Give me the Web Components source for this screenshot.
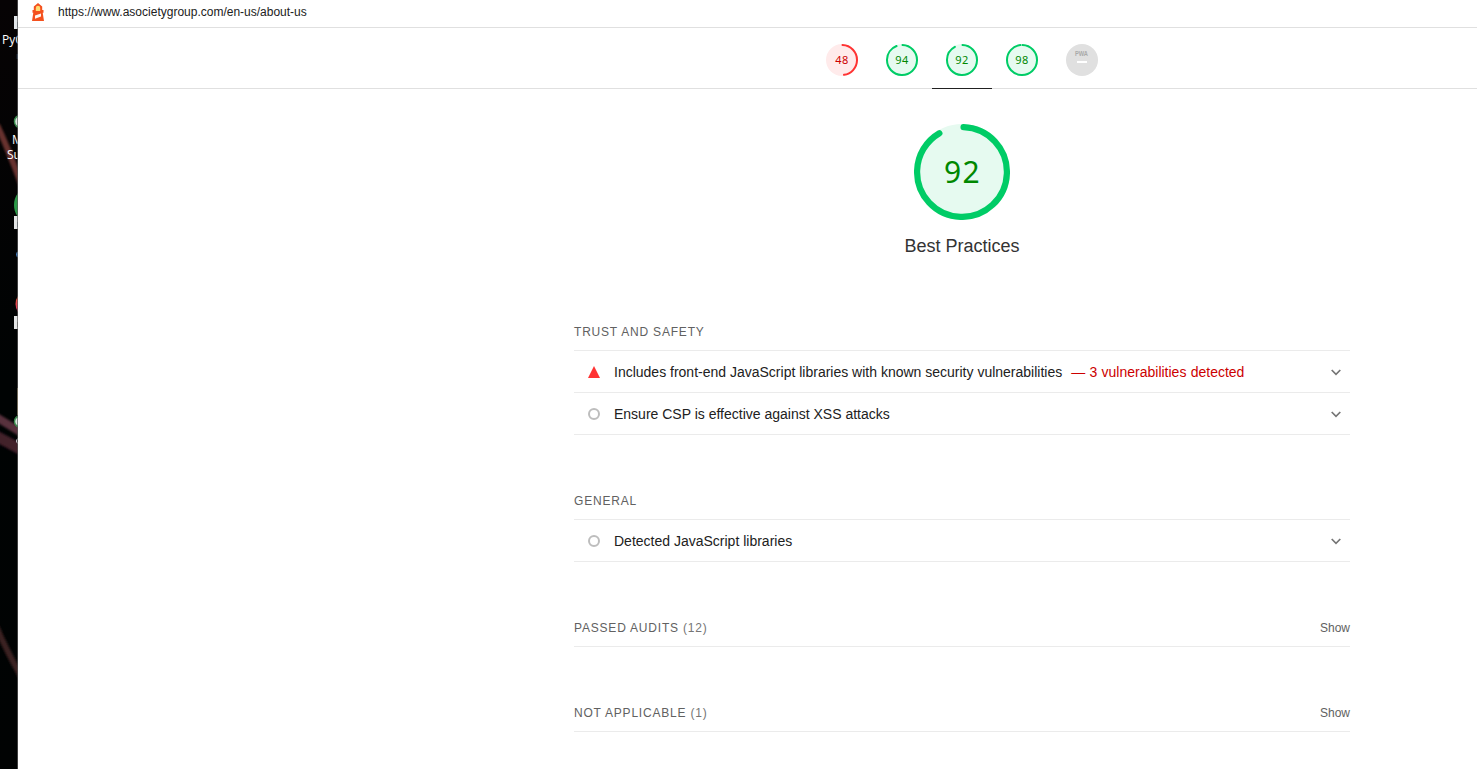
<!DOCTYPE html>
<html lang="en">
<head>
<meta charset="utf-8">
<title>Lighthouse Report</title>
<style>
html,body{margin:0;height:100%;overflow:hidden;background:#fff}
body{font-family:"Liberation Sans",Arial,sans-serif;color:#212121}
</style>
</head>
<body>
<lh-window>
  <desk-strip slot="desk"></desk-strip>
  <lh-topbar>https://www.asocietygroup.com/en-us/about-us</lh-topbar>
  <lh-scores>
    <score-gauge score="48" level="fail"></score-gauge>
    <score-gauge score="94"></score-gauge>
    <score-gauge score="92" selected></score-gauge>
    <score-gauge score="98"></score-gauge>
    <pwa-gauge></pwa-gauge>
  </lh-scores>
  <lh-category>
    <score-gauge slot="gauge" score="92" large></score-gauge>
    <span slot="name">Best Practices</span>
    <audit-group label="Trust and Safety">
      <audit-row status="fail">Includes front-end JavaScript libraries with known security vulnerabilities<span slot="detail">— 3 vulnerabilities detected</span></audit-row>
      <audit-row>Ensure CSP is effective against XSS attacks</audit-row>
    </audit-group>
    <audit-group label="General">
      <audit-row>Detected JavaScript libraries</audit-row>
    </audit-group>
    <audit-group label="Passed audits" count="(12)"></audit-group>
    <audit-group label="Not applicable" count="(1)"></audit-group>
  </lh-category>
</lh-window>
<script>
const define = (name, render) => customElements.define(name, class extends HTMLElement {
  constructor() { super(); this.attachShadow({ mode: 'open' }); }
  connectedCallback() { this.shadowRoot.innerHTML = render(this); }
});

define('lh-window', () => `
<style>
:host{display:grid;grid-template-columns:18px minmax(0,1fr);width:100%;height:100vh;overflow:hidden}
main{background:#fff;min-width:0;overflow:hidden}
</style><slot name="desk"></slot><main><slot></slot></main>`);

define('desk-strip', () => `
<style>
:host{display:block;overflow:hidden;background:#010303}
svg{display:block}
text{font:12px "Open Sans","Noto Sans",sans-serif;fill:#fff}
</style>
<svg width="18" height="769" viewBox="0 0 18 769">
<defs>
<linearGradient id="edge" x1="0" y1="0" x2="0" y2="1"><stop offset="0" stop-color="#060304"/><stop offset=".5" stop-color="#000303"/><stop offset="1" stop-color="#010303"/></linearGradient>
<linearGradient id="warm" x1="0" y1="0" x2="0" y2="1"><stop offset="0" stop-color="#f0632b"/><stop offset="1" stop-color="#dc286f"/></linearGradient>
<filter id="soft" x="-50%" y="-20%" width="200%" height="140%"><feGaussianBlur stdDeviation="1.3"/></filter>
</defs>
<rect width="18" height="769" fill="url(#edge)"/>
<g filter="url(#soft)" fill="none">
<path d="M-3 125Q8 148 22 186" stroke="#67302f" stroke-width="6"/>
<path d="M-4 417L22 433" stroke="#58303e" stroke-width="8"/>
<path d="M-4 436L22 450" stroke="#43202c" stroke-width="11"/>
<path d="M-4 626Q6 650 22 678" stroke="#3b2020" stroke-width="6"/>
</g>
<path d="M14 16h4v13h-4z" fill="#e3e7ea"/><path d="M17 22h1v5h-1z" fill="#9ab"/>
<text x="2" y="44">PyC</text>
<path d="M17.3 54v5" stroke="#35577d"/>
<circle cx="21" cy="121.500" r="6.500" fill="#dbe6df" stroke="#3b8d4f" stroke-width="1.500"/>
<text x="12" y="144">M</text><text x="7" y="159">Su</text>
<ellipse cx="26" cy="205" rx="12" ry="16" fill="#2c9a48"/>
<path d="M14 216h4v13h-4z" fill="#e3e5e5"/><path d="M17 222h1v5h-1z" fill="#9ab"/>
<circle cx="19" cy="254.500" r="3" fill="#427cbd"/>
<ellipse cx="25" cy="304" rx="9.500" ry="12" fill="url(#warm)"/>
<path d="M14 316h4v13h-4z" fill="#e3e5e5"/><path d="M17 322h1v5h-1z" fill="#aaa"/>
<path d="M17 388h1v27h-1z" fill="#a58e59"/>
<circle cx="20" cy="421.500" r="5.500" fill="#dbe6df" stroke="#3b8d4f" stroke-width="1.500"/>
<circle cx="19" cy="441" r="2.500" fill="none" stroke="#d7dde0"/>
<path d="M17 0h1v769h-1z" fill="#5b5b5b" opacity=".7"/>
</svg>`);

define('lh-topbar', () => `
<style>
:host{display:flex;align-items:center;height:27px;border-bottom:1px solid #e0e0e0;font-size:12px;color:#212121}
svg{width:14px;height:20px;margin:-3px 13px 0 13px;flex:none}
span{position:relative;top:-2px}
</style>
<svg viewBox="0 0 14 20">
<path d="M2.800 4.500L7 1l4.200 3.500V8h1.300v2.700h-.8L13 19H1l1.300-8.300h-.8V8h1.300z" fill="#f4511e"/>
<path d="M4.800 9V6Q4.800 3.700 7 3.700T9.200 6v3z" fill="#ffdc72"/>
<path d="M4 13.500l6-2v3L4 16.800z" fill="#fff5f0"/>
</svg><span><slot></slot></span>`);

define('lh-scores', () => `
<style>
:host{display:flex;height:60px;padding-left:794px;border-bottom:1px solid #e0e0e0}
</style><slot></slot>`);

define('score-gauge', el => {
  const n = +el.getAttribute('score'), big = el.hasAttribute('large'), bad = el.getAttribute('level') === 'fail';
  const s = big ? 96 : 32, w = big ? 6.2 : 2, r = s / 2 - w / 2, c = 2 * Math.PI * r;
  const len = Math.max(0, n / 100 * c - w / 2);
  return `
<style>
:host{display:flex;justify-content:center;align-items:center;box-sizing:border-box;flex:none;width:${big ? 96 : 60}px;height:${big ? 96 : 61}px;${big ? '' : 'padding-bottom:' + (el.hasAttribute('selected') ? 0 : 1) + 'px;padding-top:3px;'}${el.hasAttribute('selected') ? 'border-bottom:1px solid #212121;' : ''}}
.dial{display:grid;width:${s}px;height:${s}px}
.dial>*{grid-area:1/1}
b{place-self:center;font:400 ${big ? '30px' : '11px'}/1 "Noto Sans",sans-serif;letter-spacing:${big ? 1.3 : .4}px;margin-left:${big ? 1 : 0}px;color:${bad ? '#c00' : '#080'};z-index:1}
</style>
<div class="dial"><svg width="${s}" height="${s}">
<circle cx="${s / 2}" cy="${s / 2}" r="${s / 2}" fill="${bad ? '#ffebeb' : '#e6faf0'}"/>
<circle cx="${s / 2}" cy="${s / 2}" r="${r}" fill="none" stroke="${bad ? '#f33' : '#0c6'}" stroke-width="${w}" stroke-linecap="round" stroke-dasharray="${len} ${c}" transform="rotate(${-90 + w / 4 / r * 57.3} ${s / 2} ${s / 2})"/>
</svg><b>${n}</b></div>`;
});

define('pwa-gauge', () => `
<style>
:host{display:flex;justify-content:center;align-items:center;width:60px;height:61px;box-sizing:border-box;padding:3px 0 1px;flex:none}
text{font:700 7px "Liberation Sans",sans-serif;fill:#aaa;text-anchor:middle}
</style>
<svg width="32" height="32"><circle cx="16" cy="16" r="16" fill="#e0e0e0"/><text x="15.500" y="11.500" textLength="13" lengthAdjust="spacingAndGlyphs">PWA</text><path d="M11 17h10v2H11z" fill="#fff"/></svg>`);

define('lh-category', () => `
<style>
:host{display:block;width:776px;padding:35px 0 0 556px}
header{display:flex;flex-direction:column;align-items:center;font-size:18px;line-height:20px;gap:16px;margin-bottom:67px;color:#333}
</style><header><slot name="gauge"></slot><slot name="name"></slot></header><slot></slot>`);

define('audit-group', el => `
<style>
:host{display:block;margin-bottom:57px}
header{display:flex;align-items:center;justify-content:space-between;height:27px;border-bottom:1px solid #ebebeb;font-size:12px;color:#616161}
header>*{transform:translateY(-5px)}
.label{letter-spacing:.8px;text-transform:uppercase}
.count{color:#757575}
</style>
<header><span class="label">${el.getAttribute('label')}${el.hasAttribute('count') ? ` <span class="count">${el.getAttribute('count')}</span>` : ''}</span>${el.hasAttribute('count') ? '<span>Show</span>' : ''}</header><slot></slot>`);

define('audit-row', el => `
<style>
:host{display:flex;align-items:center;height:41px;border-bottom:1px solid #ebebeb;padding:0 8px 0 14px;font-size:14px;line-height:20px;color:#212121}
.icon{width:12px;height:12px;margin-right:14px;flex:none}
.detail{color:#c00;margin-left:9px;word-spacing:.4px}
.arrow{width:12px;height:12px;margin-left:auto}
svg{position:relative;top:.5px}
</style>
<svg class="icon" viewBox="0 0 12 12">${el.getAttribute('status') === 'fail' ? '<path d="M6 0l6 12H0z" fill="#f33"/>' : '<circle cx="6" cy="6" r="5" fill="none" stroke="#bdbdbd" stroke-width="2"/>'}</svg>
<span class="text"><slot></slot></span><span class="text detail"><slot name="detail"></slot></span>
<svg class="arrow" viewBox="0 0 12 12"><path d="M1.700 4L6 8.300 10.300 4" fill="none" stroke="#757575" stroke-width="1.700"/></svg>`);
</script>
</body>
</html>
